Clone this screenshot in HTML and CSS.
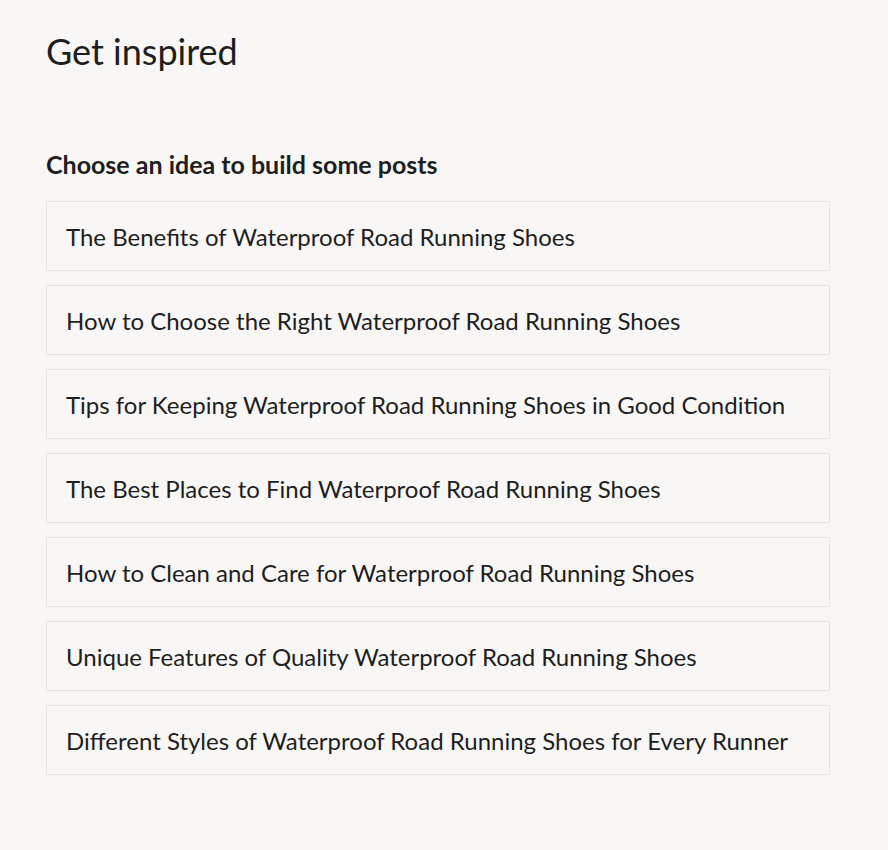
FILE: index.html
```html
<!DOCTYPE html>
<html lang="en">

<head>
    <meta charset="UTF-8">
    <meta name="viewport" content="width=device-width, initial-scale=1.0">
    <title>Get inspired</title>
    <link rel="stylesheet" href="styles.css">
</head>

<body>
    <div class="page">
        <h1 class="title">Get inspired</h1>

        <section class="ideas">
            <h2 class="ideas-heading">Choose an idea to build some posts</h2>

            <ul class="idea-list">
                <li class="idea">The Benefits of Waterproof Road Running Shoes</li>
                <li class="idea">How to Choose the Right Waterproof Road Running Shoes</li>
                <li class="idea">Tips for Keeping Waterproof Road Running Shoes in Good Condition</li>
                <li class="idea">The Best Places to Find Waterproof Road Running Shoes</li>
                <li class="idea">How to Clean and Care for Waterproof Road Running Shoes</li>
                <li class="idea">Unique Features of Quality Waterproof Road Running Shoes</li>
                <li class="idea">Different Styles of Waterproof Road Running Shoes for Every Runner</li>
            </ul>
        </section>
    </div>
</body>

</html>
```

FILE: styles.css
```css
body {
    margin: 0;
    padding: 0;
    background-color: #f8f7f5;
    color: #1e1e1e;
    font-family: Lato, "Open Sans", sans-serif;
}

.page {
    padding: 28px 58px 40px 46px;
}

.title {
    margin: 0;
    font-size: 36px;
    font-weight: 400;
    line-height: 46px;
}

.ideas {
    margin-top: 75px;
}

.ideas-heading {
    margin: 0 0 22px 0;
    font-size: 25px;
    font-weight: 700;
    line-height: 30px;
}

.idea-list {
    list-style: none;
    margin: 0;
    padding: 0;
    display: flex;
    flex-direction: column;
    gap: 14px;
}

.idea {
    height: 70px;
    box-sizing: border-box;
    display: flex;
    align-items: center;
    padding: 0 19px;
    border: 1px solid #e6e5e3;
    font-size: 24px;
}
```
